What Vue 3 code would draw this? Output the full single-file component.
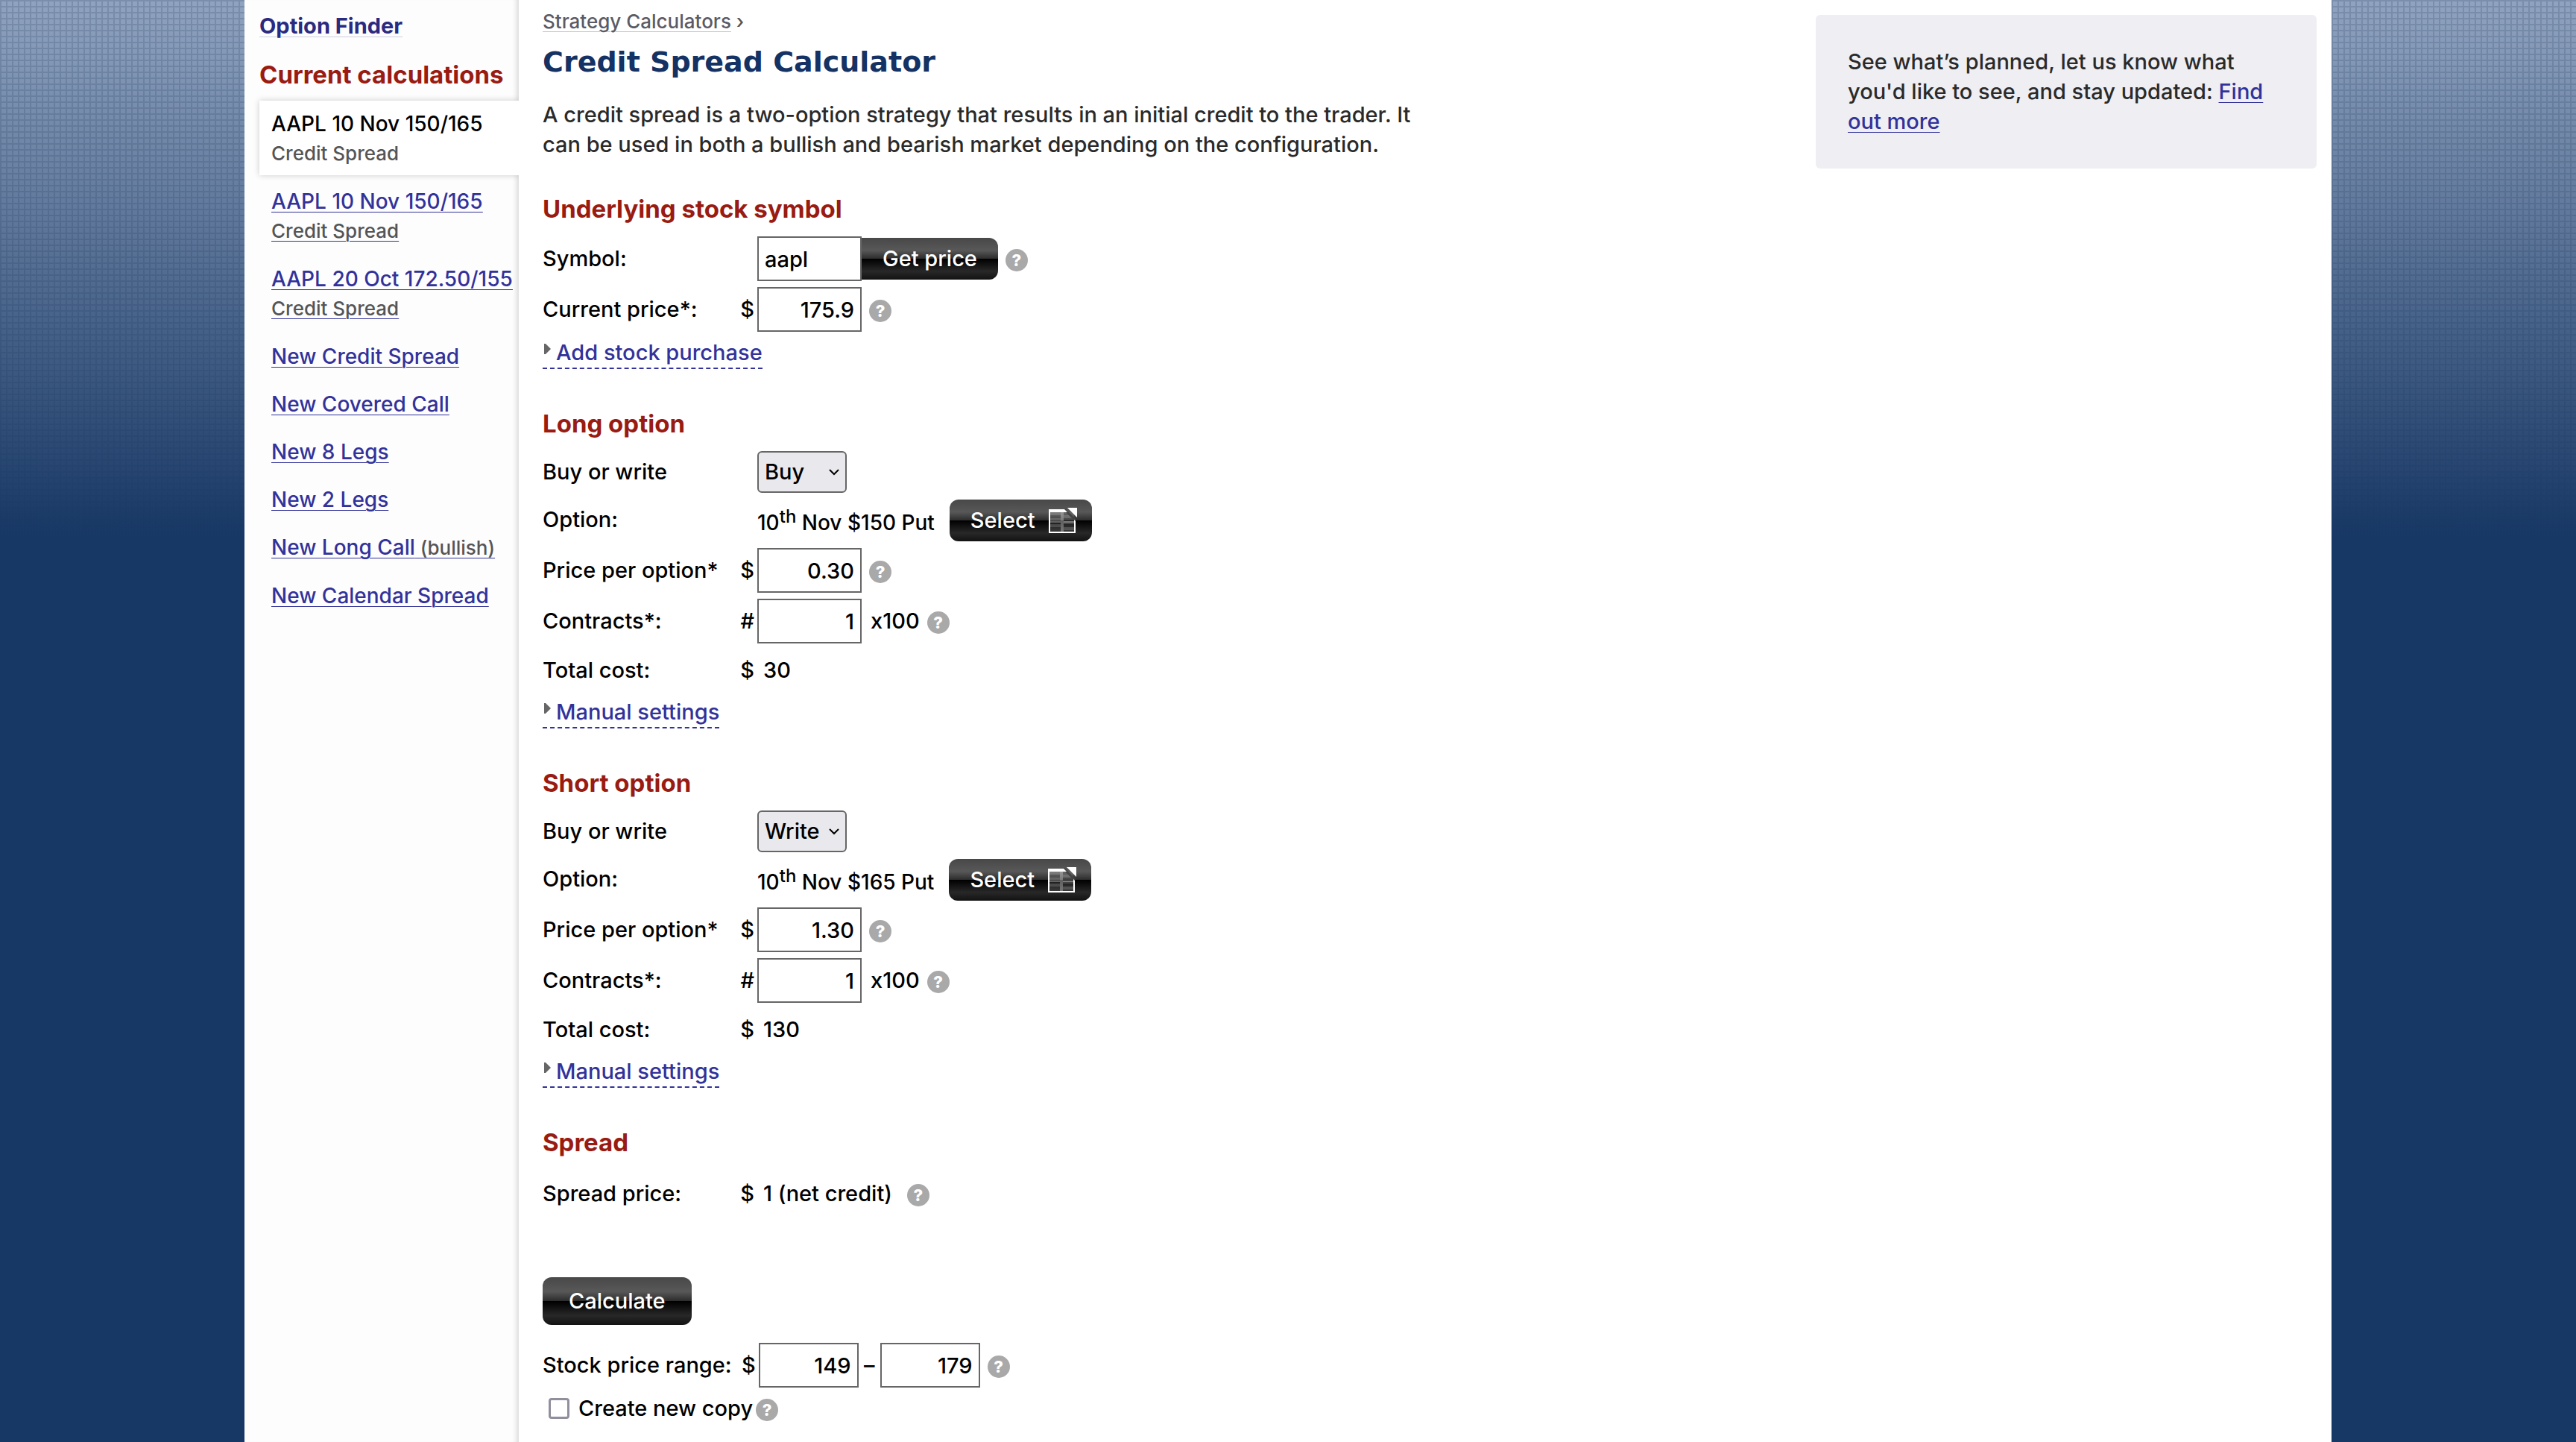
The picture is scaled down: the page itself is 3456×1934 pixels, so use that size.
<script setup>
import { ref } from 'vue'

const calculations = [
  { name: 'AAPL 10 Nov 150/165', kind: 'Credit Spread', current: true },
  { name: 'AAPL 10 Nov 150/165', kind: 'Credit Spread' },
  { name: 'AAPL 20 Oct 172.50/155', kind: 'Credit Spread' },
]

const newLinks = [
  { name: 'New Credit Spread' },
  { name: 'New Covered Call' },
  { name: 'New 8 Legs' },
  { name: 'New 2 Legs' },
  { name: 'New Long Call', note: '(bullish)' },
  { name: 'New Calendar Spread' },
]

const symbol = ref('aapl')
const currentPrice = ref('175.9')
const legs = ref([
  { id: 'long', title: 'Long option', side: 'Buy', strike: 150, price: '0.30', contracts: '1', total: 30 },
  { id: 'short', title: 'Short option', side: 'Write', strike: 165, price: '1.30', contracts: '1', total: 130 },
])
const rangeFrom = ref('149')
const rangeTo = ref('179')
const newCopy = ref(false)
</script>

<template>
  <div class="backdrop">
    <div class="page">
      <nav class="sidebar">
        <a class="finder" href="#">Option Finder</a>
        <h2 class="side-title">Current calculations</h2>
        <ul class="side-list">
          <li v-for="(item, i) in calculations" :key="i" :class="{ current: item.current }">
            <div v-if="item.current" class="entry">
              <span class="name">{{ item.name }}</span>
              <span class="kind">{{ item.kind }}</span>
            </div>
            <a v-else class="entry" href="#">
              <span class="name">{{ item.name }}</span>
              <span class="kind">{{ item.kind }}</span>
            </a>
          </li>
          <li v-for="item in newLinks" :key="item.name">
            <a class="new" href="#">{{ item.name }}<small v-if="item.note">&nbsp;{{ item.note }}</small></a>
          </li>
        </ul>
      </nav>

      <main class="main">
        <div class="content">
          <p class="crumbs"><a href="#">Strategy Calculators</a> ›</p>
          <h1>Credit Spread Calculator</h1>
          <p class="intro">
            A credit spread is a two-option strategy that results in an initial credit to the trader. It
            can be used in both a bullish and bearish market depending on the configuration.
          </p>

          <section>
            <h2>Underlying stock symbol</h2>
            <div class="row">
              <label class="label" for="symbol">Symbol:</label>
              <span class="prefix"></span>
              <input id="symbol" v-model="symbol" class="field text" type="text" />
              <button class="dark joined" type="button">Get price</button>
              <button class="help" type="button" aria-label="Help">?</button>
            </div>
            <div class="row">
              <label class="label" for="current-price">Current price*:</label>
              <span class="prefix">$</span>
              <input id="current-price" v-model="currentPrice" class="field" type="text" />
              <button class="help" type="button" aria-label="Help">?</button>
            </div>
            <a class="toggle" href="#">
              <svg class="arrow" viewBox="0 0 9 14" aria-hidden="true"><path d="M0 0h2l7 7-7 7H0z" fill="#666" /></svg>Add stock purchase</a>
          </section>

          <section v-for="leg in legs" :key="leg.id">
            <h2>{{ leg.title }}</h2>
            <div class="row side-row">
              <label class="label" :for="leg.id + '-side'">Buy or write</label>
              <span class="prefix"></span>
              <span class="select">
                <select :id="leg.id + '-side'" v-model="leg.side">
                  <option>Buy</option>
                  <option>Write</option>
                </select>
                <svg class="chevron" viewBox="0 0 14 9" aria-hidden="true"><path d="M1 1l6 6 6-6" fill="none" stroke="#000" stroke-width="2" /></svg>
              </span>
            </div>
            <div class="row option-row">
              <span class="label">Option:</span>
              <span class="prefix"></span>
              <span class="contract">10<sup>th</sup> Nov ${{ leg.strike }} Put</span>
              <button class="dark pick" type="button">
                Select
                <svg viewBox="0 0 38 34" aria-hidden="true">
                  <path d="M2 6h32v26H2z" fill="#fff" fill-opacity=".1" />
                  <path d="M2 6h14v4H2zM2 14h14v4H2zM2 22h14v4H2zM20 10h12v4H20zM20 18h14v4H20zM20 26h14v4H20z" fill="#fff" fill-opacity=".16" />
                  <path d="M16 6h4v26h-4zM2 18h32v2H2z" fill="#fff" fill-opacity=".3" />
                  <path d="M21 2l15 15" stroke="#444" stroke-width="3" />
                  <path d="M0 2h21l4 4H2v26h32V16l2 2v16H0z" fill="#fff" />
                  <path d="M25 0h13v13z" fill="#fff" />
                </svg>
              </button>
            </div>
            <div class="row">
              <label class="label" :for="leg.id + '-price'">Price per option*</label>
              <span class="prefix">$</span>
              <input :id="leg.id + '-price'" v-model="leg.price" class="field" type="text" />
              <button class="help" type="button" aria-label="Help">?</button>
            </div>
            <div class="row">
              <label class="label" :for="leg.id + '-contracts'">Contracts*:</label>
              <span class="prefix">#</span>
              <input :id="leg.id + '-contracts'" v-model="leg.contracts" class="field" type="text" />
              <span class="times">x100</span>
              <button class="help" type="button" aria-label="Help">?</button>
            </div>
            <div class="row total-row">
              <span class="label">Total cost:</span>
              <span class="prefix">$</span>
              <span class="value">{{ leg.total }}</span>
            </div>
            <a class="toggle" href="#">
              <svg class="arrow" viewBox="0 0 9 14" aria-hidden="true"><path d="M0 0h2l7 7-7 7H0z" fill="#666" /></svg>Manual settings</a>
          </section>

          <section>
            <h2>Spread</h2>
            <div class="row spread-row">
              <span class="label">Spread price:</span>
              <span class="prefix">$</span>
              <span class="value">1 (net credit)</span>
              <button class="help" type="button" aria-label="Help">?</button>
            </div>
          </section>

          <button class="dark calculate" type="button">Calculate</button>
          <div class="row">
            <label class="label" for="range-from">Stock price range:</label>
            <span class="prefix">$</span>
            <input id="range-from" v-model="rangeFrom" class="field" type="text" />
            <span class="dash">–</span>
            <input v-model="rangeTo" class="field" type="text" aria-label="Stock price range, upper end" />
            <button class="help" type="button" aria-label="Help">?</button>
          </div>
          <div class="row copy-row">
            <input id="new-copy" v-model="newCopy" type="checkbox" />
            <label for="new-copy">Create new copy</label>
            <button class="help" type="button" aria-label="Help">?</button>
          </div>
        </div>

        <aside class="notice">
          See what’s planned, let us know what you'd like to see, and stay updated: <a href="#">Find out more</a>
        </aside>
      </main>
    </div>
  </div>
</template>

<style>
body {
  margin: 0;
  background: #173764;
}
</style>

<style scoped>
.backdrop {
  min-height: 100vh;
  display: flex;
  justify-content: center;
  background:
    linear-gradient(rgba(23, 55, 100, 0), #173764 720px),
    linear-gradient(#7b8fac 2px, transparent 2px) 0 0 / 8px 8px,
    linear-gradient(90deg, #7b8fac 2px, transparent 2px) 0 0 / 8px 8px,
    #90a3c0;
  font-family: Inter, "Liberation Sans", sans-serif;
  font-size: 29px;
  font-weight: 450;
  line-height: 40px;
  color: #000;
}
.page {
  flex: 1;
  max-width: 2800px;
  display: flex;
  background: #fff;
}
h1, h2, p, ul {
  margin: 0;
  padding: 0;
}
a {
  color: #32329a;
  text-decoration-thickness: 1px;
  text-underline-offset: 4px;
}

.sidebar {
  flex: 0 0 368px;
  box-sizing: border-box;
  padding: 15px 0 40px 20px;
  background: #fdfdfe;
  box-shadow: inset -8px 0 6px -5px rgba(0, 0, 0, 0.14);
}
.finder {
  display: inline-block;
  font-weight: 700;
  color: #2a2a80;
  text-decoration-color: #ccccdf;
}
.side-title,
section h2 {
  font-size: 33px;
  font-weight: 700;
  color: #991b12;
}
.side-title {
  margin: 25px 0 15px;
  white-space: nowrap;
}
.side-list {
  list-style: none;
  font-size: 28px;
}
.side-list li {
  padding: 11px 0 9px 16px;
  margin-bottom: 4px;
  white-space: nowrap;
}
.side-list .current {
  background: #fff;
  box-shadow: 0 0 8px rgba(0, 0, 0, 0.2);
  clip-path: inset(-8px 0 -8px -8px);
}
.entry {
  display: flex;
  flex-direction: column;
  align-items: flex-start;
}
a .kind {
  text-decoration: underline 1px #32329a;
}
a .name {
  text-decoration: underline 1px;
}
.name, .kind {
  text-underline-offset: 4px;
}
.kind, small {
  font-size: 26px;
  color: #555;
}

.main {
  flex: 1;
  min-width: 0;
  display: flex;
  justify-content: space-between;
  align-items: flex-start;
  padding: 0 20px 20px 32px;
}
.content {
  flex: 0 1 1190px;
  padding-top: 13px;
}
.crumbs {
  font-size: 26px;
  line-height: 32px;
  color: #555;
}
.crumbs a {
  color: #5b5b66;
  text-decoration-color: #c4c4cc;
}
h1 {
  margin: 16px 0 29px;
  font-family: "DejaVu Sans", Verdana, sans-serif;
  font-size: 38px;
  line-height: 44px;
  font-weight: 700;
  color: #143264;
}
.intro {
  margin-bottom: 46px;
  color: #2a2a2a;
}
section {
  margin-bottom: 53px;
}
section h2 {
  margin-bottom: 17px;
}

.row {
  display: flex;
  align-items: center;
  min-height: 60px;
  margin-bottom: 8px;
}
.side-row,
.total-row {
  min-height: 56px;
}
.option-row {
  min-height: 58px;
}
.spread-row {
  min-height: 64px;
}
.label {
  flex: 0 0 252px;
  white-space: nowrap;
}
.prefix {
  flex: 0 0 36px;
  box-sizing: border-box;
  padding-right: 4px;
  text-align: right;
}
.field {
  width: 140px;
  height: 60px;
  box-sizing: border-box;
  padding: 0 8px;
  border: 2px solid #666;
  background: #fff;
  color: #000;
  font: inherit;
  text-align: right;
}
.field.text {
  text-align: left;
}
.dash {
  flex: 0 0 29px;
  text-align: center;
}
.dash + .field,
.field:has(+ .dash) {
  width: 134px;
}
.dark {
  height: 56px;
  padding: 0 28px;
  border: 0;
  border-radius: 12px;
  background: linear-gradient(#484848, #585858 30%, #2c2c2c 50%, #000 50%, #282828 80%, #121212);
  color: #fff;
  font: inherit;
}
.joined {
  border-radius: 0 12px 12px 0;
}
.help {
  width: 30px;
  height: 30px;
  margin: 4px 0 0 10px;
  padding: 0;
  border: 0;
  border-radius: 50%;
  background: #a9a9a9;
  color: #fff;
  font: 800 22px/30px Inter, sans-serif;
}
.select {
  position: relative;
}
select {
  display: block;
  width: 120px;
  height: 56px;
  padding: 0 8px;
  border: 2px solid #666;
  border-radius: 6px;
  background: #e9e9ed;
  color: #000;
  font: inherit;
  appearance: none;
}
.chevron {
  position: absolute;
  right: 10px;
  top: 24px;
  width: 14px;
  height: 9px;
  pointer-events: none;
}
.option-row .label {
  align-self: flex-start;
  line-height: 56px;
}
.contract {
  padding-top: 6px;
  margin-right: 20px;
  font-size: 28px;
}
sup {
  font-size: 24px;
  line-height: 0;
}
.pick {
  display: flex;
  align-items: center;
  gap: 18px;
  padding: 0 20px 0 28px;
}
.pick svg {
  width: 38px;
  height: 34px;
}
.times {
  margin-left: 12px;
}
.value {
  padding-left: 8px;
}
.value + .help {
  margin-left: 20px;
}
.toggle {
  display: inline-block;
  border-bottom: 2px dashed #32329a;
  text-decoration: none;
  vertical-align: top;
}
.arrow {
  width: 9px;
  height: 14px;
  margin: 0 7px 8px 2px;
}
.calculate {
  display: block;
  height: 64px;
  padding: 0 35px;
  margin: 80px 0 24px;
}
.copy-row {
  min-height: 40px;
  margin-bottom: 0;
}
.copy-row input {
  width: 28px;
  height: 28px;
  margin: 0 12px 0 8px;
  border: 3px solid #8f8f9d;
  border-radius: 4px;
  background: #fff;
  appearance: none;
}
.copy-row input:checked {
  background: #32329a;
}
.copy-row .help {
  margin-left: 4px;
}
.notice {
  flex: 0 1 672px;
  box-sizing: border-box;
  margin-top: 20px;
  padding: 43px;
  border-radius: 6px;
  background: #eeeef3;
  color: #2a2a2a;
}
</style>
